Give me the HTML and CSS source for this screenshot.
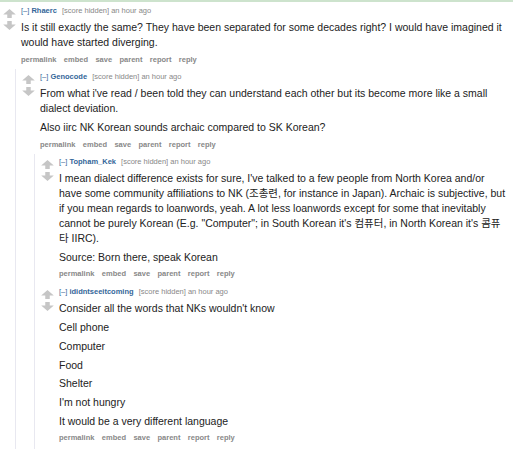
FILE: index.html
```html
<!DOCTYPE html>
<html lang="en">
<head>
    <meta charset="UTF-8">
    <meta name="viewport" content="width=device-width, initial-scale=1.0">
    <title>Comments</title>
    <link rel="stylesheet" href="styles.css">
</head>
<body>
    <div class="comment-area">
        <div class="comment top">
            <div class="comment-row">
                <div class="midcol">
                    <svg class="arrow" viewBox="0 0 14 10"><polygon points="7,0 14,6 9.5,6 9.5,10 4.5,10 4.5,6 0,6"/></svg>
                    <svg class="arrow" viewBox="0 0 14 10"><polygon points="4.5,0 9.5,0 9.5,4 14,4 7,10 0,4 4.5,4"/></svg>
                </div>
                <div class="entry">
                    <p class="tagline"><a class="expand">[–]</a> <a class="author">Rhaerc</a> <span class="score">[score hidden]</span> an hour ago</p>
                    <div class="md">
                        <p>Is it still exactly the same? They have been separated for some decades right? I would have imagined it would have started diverging.</p>
                    </div>
                    <ul class="buttons">
                        <li>permalink</li><li>embed</li><li>save</li><li>parent</li><li>report</li><li>reply</li>
                    </ul>
                </div>
            </div>

            <div class="child">
                <div class="comment">
                    <div class="comment-row">
                        <div class="midcol">
                            <svg class="arrow" viewBox="0 0 14 10"><polygon points="7,0 14,6 9.5,6 9.5,10 4.5,10 4.5,6 0,6"/></svg>
                            <svg class="arrow" viewBox="0 0 14 10"><polygon points="4.5,0 9.5,0 9.5,4 14,4 7,10 0,4 4.5,4"/></svg>
                        </div>
                        <div class="entry">
                            <p class="tagline"><a class="expand">[–]</a> <a class="author">Genocode</a> <span class="score">[score hidden]</span> an hour ago</p>
                            <div class="md">
                                <p>From what i've read / been told they can understand each other but its become more like a small dialect deviation.</p>
                                <p>Also iirc NK Korean sounds archaic compared to SK Korean?</p>
                            </div>
                            <ul class="buttons">
                                <li>permalink</li><li>embed</li><li>save</li><li>parent</li><li>report</li><li>reply</li>
                            </ul>
                        </div>
                    </div>

                    <div class="child">
                        <div class="comment">
                            <div class="comment-row">
                                <div class="midcol">
                                    <svg class="arrow" viewBox="0 0 14 10"><polygon points="7,0 14,6 9.5,6 9.5,10 4.5,10 4.5,6 0,6"/></svg>
                                    <svg class="arrow" viewBox="0 0 14 10"><polygon points="4.5,0 9.5,0 9.5,4 14,4 7,10 0,4 4.5,4"/></svg>
                                </div>
                                <div class="entry">
                                    <p class="tagline"><a class="expand">[–]</a> <a class="author">Topham_Kek</a> <span class="score">[score hidden]</span> an hour ago</p>
                                    <div class="md">
                                        <p>I mean dialect difference exists for sure, I've talked to a few people from North Korea and/or have some community affiliations to NK (조총련, for instance in Japan). Archaic is subjective, but if you mean regards to loanwords, yeah. A lot less loanwords except for some that inevitably cannot be purely Korean (E.g. "Computer"; in South Korean it's 컴퓨터, in North Korean it's 콤퓨타 IIRC).</p>
                                        <p>Source: Born there, speak Korean</p>
                                    </div>
                                    <ul class="buttons">
                                        <li>permalink</li><li>embed</li><li>save</li><li>parent</li><li>report</li><li>reply</li>
                                    </ul>
                                </div>
                            </div>
                        </div>

                        <div class="comment">
                            <div class="comment-row">
                                <div class="midcol">
                                    <svg class="arrow" viewBox="0 0 14 10"><polygon points="7,0 14,6 9.5,6 9.5,10 4.5,10 4.5,6 0,6"/></svg>
                                    <svg class="arrow" viewBox="0 0 14 10"><polygon points="4.5,0 9.5,0 9.5,4 14,4 7,10 0,4 4.5,4"/></svg>
                                </div>
                                <div class="entry">
                                    <p class="tagline"><a class="expand">[–]</a> <a class="author">ididntseeitcoming</a> <span class="score">[score hidden]</span> an hour ago</p>
                                    <div class="md">
                                        <p>Consider all the words that NKs wouldn't know</p>
                                        <p>Cell phone</p>
                                        <p>Computer</p>
                                        <p>Food</p>
                                        <p>Shelter</p>
                                        <p>I'm not hungry</p>
                                        <p>It would be a very different language</p>
                                    </div>
                                    <ul class="buttons">
                                        <li>permalink</li><li>embed</li><li>save</li><li>parent</li><li>report</li><li>reply</li>
                                    </ul>
                                </div>
                            </div>
                        </div>
                    </div>
                </div>
            </div>
        </div>
    </div>
</body>
</html>
```

FILE: styles.css
```css
* {
    margin: 0;
    padding: 0;
    box-sizing: border-box;
}

body {
    background-color: #fff;
    font-family: "Liberation Sans", Arial, "Noto Sans CJK KR", sans-serif;
    color: #222;
}

.comment-area {
    border-top: 2px solid #cde3cd;
    padding-top: 1px;
}

.comment {
    padding-top: 2px;
    padding-left: 6px;
}

.comment.top {
    padding-left: 3px;
}

.child .comment + .comment {
    margin-top: 4px;
}

.comment-row {
    display: flex;
}

.midcol {
    width: 18px;
    flex-shrink: 0;
    display: flex;
    flex-direction: column;
    gap: 3px;
    padding-top: 4px;
}

.arrow {
    display: block;
    width: 13px;
    height: 9px;
    fill: #c6c6c6;
}

.entry {
    flex: 1;
    padding-right: 6px;
}

.tagline {
    font-size: 7.5px;
    line-height: 12px;
    color: #888;
}

.tagline a {
    color: #369;
}

.author {
    font-weight: bold;
    margin-right: 3px;
}

.md {
    margin-top: 3px;
    font-size: 10.5px;
    line-height: 15px;
    color: #222;
}

.md p {
    margin-bottom: 3.7px;
}

.buttons {
    list-style: none;
    display: flex;
    margin-top: 1.5px;
    font-size: 7.5px;
    line-height: 12px;
    font-weight: bold;
    color: #888;
}

.buttons li {
    padding-right: 7.4px;
}

.child {
    margin-top: 3.5px;
    margin-left: 12px;
    border-left: 1px solid #e8e8f0;
    padding-bottom: 6px;
}
```
